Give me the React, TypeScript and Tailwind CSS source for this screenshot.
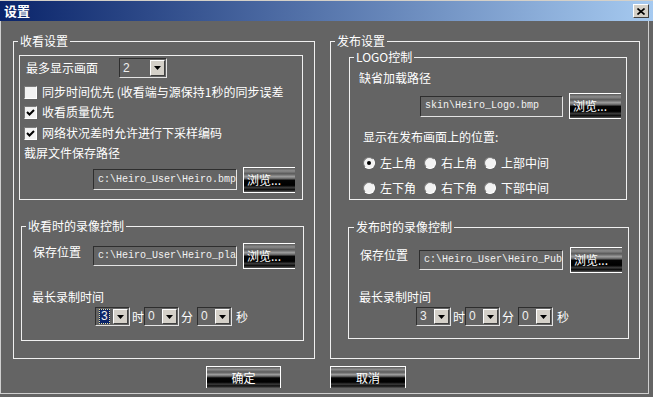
import React from "react"

const stripe =
  "bg-[linear-gradient(to_bottom,#5c5c5c_0%,#8c8c8c_12%,#5a5a5a_24%,#9c9c9c_36%,#686868_44%,#050505_52%,#000000_72%,#3c3c3c_82%,#0c0c0c_90%,#5a5a5a_100%)]"

function Check({ checked }: { checked?: boolean }) {
  return (
    <div className="flex h-[13px] w-[13px] shrink-0 items-center justify-center border border-t-[#7c7c7c] border-l-[#7c7c7c] border-r-white border-b-white bg-[#f2f2f2]">
      {checked && (
        <svg width="11" height="11" viewBox="0 0 11 11">
          <polyline points="2,5 4.5,7.5 9,3" fill="none" stroke="#000" strokeWidth="2" />
        </svg>
      )}
    </div>
  )
}

function Radio({ label, on, w }: { label: string; on?: boolean; w: string }) {
  return (
    <div className={`flex items-center gap-[5px] ${w}`}>
      <div className="flex h-[12px] w-[12px] items-center justify-center rounded-full border border-t-[#7c7c7c] border-l-[#7c7c7c] border-r-white border-b-white bg-[#f2f2f2]">
        {on && <div className="h-[4px] w-[4px] rounded-full bg-black" />}
      </div>
      <span>{label}</span>
    </div>
  )
}

function Arrow() {
  return (
    <div className="flex h-full w-[15px] items-center justify-center border border-t-white border-l-white border-r-[#404040] border-b-[#404040] bg-[#d4d0c8]">
      <svg width="7" height="4" viewBox="0 0 7 4">
        <polygon points="0,0 7,0 3.5,4" fill="#000" />
      </svg>
    </div>
  )
}

function Combo({ value, w, h, focus }: { value: string; w: string; h: string; focus?: boolean }) {
  return (
    <div className={`flex ${w} ${h} items-stretch border border-t-[#2e2e2e] border-l-[#2e2e2e] border-r-[#e4e4e4] border-b-[#e4e4e4] bg-[#646464] p-[1px]`}>
      <div className="flex flex-1 items-center pl-[2px] font-['Liberation_Sans',sans-serif] text-[12px] text-[#f0f0f0]">
        {focus ? (
          <span className="border border-dotted border-[#e8e0a0] bg-[#0a246a] px-[1px] leading-[13px]">{value}</span>
        ) : (
          <span className="leading-[13px]">{value}</span>
        )}
      </div>
      <Arrow />
    </div>
  )
}

function PathBox({ text, w, h }: { text: string; w: string; h: string }) {
  return (
    <div className={`flex ${w} ${h} items-center overflow-hidden border border-t-[#2e2e2e] border-l-[#2e2e2e] border-r-[#e4e4e4] border-b-[#e4e4e4] bg-[#646464] pl-[4px] font-['Liberation_Mono',monospace] text-[10px] whitespace-nowrap text-[#f2f2f2]`}>
      {text}
    </div>
  )
}

function Browse() {
  return (
    <div className={`flex h-[26px] w-[52px] items-center border-t border-l border-b border-white pl-[3px] text-white ${stripe}`}>
      浏览...
    </div>
  )
}

function TimeRow({ hour, focus }: { hour: string; focus?: boolean }) {
  return (
    <div className="flex h-[19px] items-center">
      <Combo value={hour} w="w-[35px]" h="h-[19px]" focus={focus} />
      <span className="ml-[2px]">时</span>
      <Combo value="0" w="w-[35px]" h="h-[19px]" />
      <span className="ml-[2px]">分</span>
      <div className="ml-[4px]">
        <Combo value="0" w="w-[35px]" h="h-[19px]" />
      </div>
      <span className="ml-[4px]">秒</span>
    </div>
  )
}

export default function App() {
  return (
    <div className="flex h-[397px] w-[653px] flex-col bg-[#646464] font-['Noto_Sans_CJK_SC','Noto_Sans',sans-serif] text-[12px] leading-[14px] text-white">
      {/* title bar */}
      <div className="flex h-[21px] shrink-0 items-center justify-between border-t border-[#d4d0c8] bg-[linear-gradient(to_right,#0a246a,#a6caf0)] pl-[4px]">
        <span className="text-[13px] font-bold">设置</span>
        <div className="mr-[4px] flex h-[14px] w-[16px] items-center justify-center border border-t-white border-l-white border-r-[#404040] border-b-[#404040] bg-[#d4d0c8]">
          <svg width="8" height="7" viewBox="0 0 8 7">
            <path d="M0.5 0.5 L7.5 6.5 M7.5 0.5 L0.5 6.5" stroke="#000" strokeWidth="1.6" />
          </svg>
        </div>
      </div>

      {/* body */}
      <div className="flex h-[373px] w-[649px] flex-col border-l border-r border-b border-[#cfcfcf]">
        <div className="mt-[13px] flex">
          {/* left */}
          <fieldset className="ml-[12px] h-[325px] w-[302px] border border-[#f0f0f0]">
            <legend className="ml-[4px] px-[2px] leading-[14px]">收看设置</legend>
            <div className="flex flex-col">
              <div className="mt-[7px] ml-[5px] flex h-[145px] w-[284px] flex-col border border-[#f0f0f0]">
                <div className="mt-[2px] flex h-[20px] items-center pl-[6px]">
                  <span className="w-[93px]">最多显示画面</span>
                  <Combo value="2" w="w-[48px]" h="h-[20px]" />
                </div>
                <div className="mt-[4px] flex h-[20px] items-center gap-[5px] pl-[4px]">
                  <Check />
                  <span className="whitespace-nowrap">同步时间优先 (收看端与源保持1秒的同步误差</span>
                </div>
                <div className="flex h-[20px] items-center gap-[5px] pl-[4px]">
                  <Check checked />
                  <span>收看质量优先</span>
                </div>
                <div className="mt-[1px] flex h-[20px] items-center gap-[5px] pl-[4px]">
                  <Check checked />
                  <span>网络状况差时允许进行下采样编码</span>
                </div>
                <div className="flex h-[20px] items-center pl-[4px]">截屏文件保存路径</div>
                <div className="mt-[3px] flex h-[27px] items-center pl-[73px]">
                  <PathBox text="c:\Heiro_User\Heiro.bmp" w="w-[144px]" h="h-[21px]" />
                  <div className="ml-[6px]">
                    <Browse />
                  </div>
                </div>
              </div>

              <fieldset className="mt-[19px] ml-[7px] h-[122px] w-[283px] border border-[#f0f0f0]">
                <legend className="ml-[4px] px-[2px] leading-[14px]">收看时的录像控制</legend>
                <div className="flex flex-col">
                  <div className="mt-[10px] flex h-[26px] items-center">
                    <span className="ml-[11px] w-[60px] self-start pt-[2px]">保存位置</span>
                    <PathBox text="c:\Heiro_User\Heiro_pla" w="w-[144px]" h="h-[20px]" />
                    <div className="ml-[6px]">
                      <Browse />
                    </div>
                  </div>
                  <div className="mt-[21px] ml-[10px] h-[14px]">最长录制时间</div>
                  <div className="mt-[3px] ml-[73px]">
                    <TimeRow hour="3" focus />
                  </div>
                </div>
              </fieldset>
            </div>
          </fieldset>

          {/* right */}
          <fieldset className="ml-[15px] h-[325px] w-[310px] border border-[#f0f0f0]">
            <legend className="ml-[4px] px-[2px] leading-[14px]">发布设置</legend>
            <div className="flex flex-col">
              <fieldset className="mt-[2px] ml-[18px] h-[150px] w-[278px] border border-[#f0f0f0]">
                <legend className="ml-[4px] px-[2px] leading-[14px]">LOGO控制</legend>
                <div className="flex flex-col">
                  <div className="mt-[7px] ml-[9px] h-[14px]">缺省加载路径</div>
                  <div className="mt-[8px] flex h-[26px] items-center pl-[70px]">
                    <PathBox text="skin\Heiro_Logo.bmp" w="w-[143px]" h="h-[21px]" />
                    <div className="ml-[6px]">
                      <Browse />
                    </div>
                  </div>
                  <div className="mt-[11px] ml-[13px] h-[14px]">显示在发布画面上的位置:</div>
                  <div className="mt-[11px] ml-[13px] flex h-[16px] items-center">
                    <Radio label="左上角" on w="w-[61px]" />
                    <Radio label="右上角" w="w-[60px]" />
                    <Radio label="上部中间" w="w-[70px]" />
                  </div>
                  <div className="mt-[9px] ml-[13px] flex h-[16px] items-center">
                    <Radio label="左下角" w="w-[61px]" />
                    <Radio label="右下角" w="w-[60px]" />
                    <Radio label="下部中间" w="w-[70px]" />
                  </div>
                </div>
              </fieldset>

              <fieldset className="mt-[20px] ml-[17px] h-[119px] w-[281px] border border-[#f0f0f0]">
                <legend className="ml-[5px] px-[2px] leading-[14px]">发布时的录像控制</legend>
                <div className="flex flex-col">
                  <div className="mt-[13px] flex h-[26px] items-center">
                    <span className="ml-[11px] w-[59px] self-start pt-[1px]">保存位置</span>
                    <PathBox text="c:\Heiro_User\Heiro_Pub" w="w-[144px]" h="h-[20px]" />
                    <div className="ml-[7px]">
                      <Browse />
                    </div>
                  </div>
                  <div className="mt-[17px] ml-[10px] h-[14px]">最长录制时间</div>
                  <div className="mt-[3px] ml-[67px]">
                    <TimeRow hour="3" />
                  </div>
                </div>
              </fieldset>
            </div>
          </fieldset>
        </div>

        {/* buttons */}
        <div className="mt-[7px] flex gap-[49px] pl-[205px]">
          <div className={`flex h-[22px] w-[75px] items-center justify-center border-t border-l border-r border-white ${stripe}`}>
            确定
          </div>
          <div className={`flex h-[22px] w-[76px] items-center justify-center border-t border-l border-r border-white ${stripe}`}>
            取消
          </div>
        </div>
      </div>
    </div>
  )
}
